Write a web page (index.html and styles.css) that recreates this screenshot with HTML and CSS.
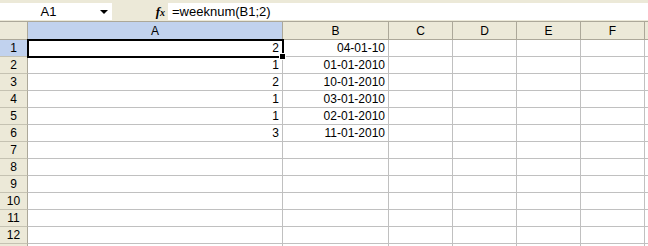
FILE: index.html
```html
<!DOCTYPE html>
<html lang="en">
<head>
    <meta charset="UTF-8">
    <title>Sheet1</title>
    <link rel="stylesheet" href="styles.css">
</head>
<body>
    <div class="formula-bar">
        <div class="name-box">
            <span class="name-text">A1</span>
            <span class="drop"></span>
        </div>
        <div class="fx"><i>f</i><b>x</b></div>
        <div class="formula">=weeknum(B1;2)</div>
    </div>
    <table class="sheet">
        <colgroup>
            <col class="corner">
            <col class="col-a">
            <col class="col-b">
            <col class="col-n"><col class="col-n"><col class="col-n"><col class="col-n"><col class="col-n">
        </colgroup>
        <thead>
            <tr>
                <th></th>
                <th class="active">A</th>
                <th>B</th>
                <th>C</th>
                <th>D</th>
                <th>E</th>
                <th>F</th>
                <th></th>
            </tr>
        </thead>
        <tbody>
            <tr>
                <th class="active">1</th>
                <td class="num selected">2<span class="sel"><span class="handle"></span></span></td>
                <td class="num">04-01-10</td>
                <td></td><td></td><td></td><td></td><td></td>
            </tr>
            <tr><th>2</th><td class="num">1</td><td class="num">01-01-2010</td><td></td><td></td><td></td><td></td><td></td></tr>
            <tr><th>3</th><td class="num">2</td><td class="num">10-01-2010</td><td></td><td></td><td></td><td></td><td></td></tr>
            <tr><th>4</th><td class="num">1</td><td class="num">03-01-2010</td><td></td><td></td><td></td><td></td><td></td></tr>
            <tr><th>5</th><td class="num">1</td><td class="num">02-01-2010</td><td></td><td></td><td></td><td></td><td></td></tr>
            <tr><th>6</th><td class="num">3</td><td class="num">11-01-2010</td><td></td><td></td><td></td><td></td><td></td></tr>
            <tr><th>7</th><td></td><td></td><td></td><td></td><td></td><td></td><td></td></tr>
            <tr><th>8</th><td></td><td></td><td></td><td></td><td></td><td></td><td></td></tr>
            <tr><th>9</th><td></td><td></td><td></td><td></td><td></td><td></td><td></td></tr>
            <tr><th>10</th><td></td><td></td><td></td><td></td><td></td><td></td><td></td></tr>
            <tr><th>11</th><td></td><td></td><td></td><td></td><td></td><td></td><td></td></tr>
            <tr><th>12</th><td></td><td></td><td></td><td></td><td></td><td></td><td></td></tr>
            <tr class="stub"><th></th><td></td><td></td><td></td><td></td><td></td><td></td><td></td></tr>
        </tbody>
    </table>
</body>
</html>
```

FILE: styles.css
```css
html, body {
    margin: 0;
    overflow: hidden;
    background-color: #fff;
    font-family: "Liberation Sans", Arial, sans-serif;
}

/* formula bar */
.formula-bar {
    display: flex;
    height: 21px;
    padding-top: 3px;
    box-sizing: border-box;
    background-color: #ece9d8;
}

.name-box {
    display: flex;
    align-items: center;
    width: 112px;
    height: 17px;
    background-color: #fff;
}

.name-text {
    width: 97px;
    text-align: center;
    font-size: 13px;
}

.drop {
    width: 0;
    height: 0;
    margin-left: 3px;
    border-left: 4px solid transparent;
    border-right: 4px solid transparent;
    border-top: 4px solid #000;
}

.fx {
    width: 56px;
    height: 17px;
    box-sizing: border-box;
    padding-right: 3px;
    text-align: right;
    font-family: "Liberation Serif", serif;
    font-size: 13px;
    line-height: 17px;
}

.fx i {
    font-weight: bold;
}

.fx b {
    font-size: 10px;
    font-style: italic;
}

.formula {
    flex: 1;
    height: 17px;
    padding-left: 4px;
    background-color: #fff;
    font-size: 13px;
    line-height: 17px;
}

/* grid */
.sheet {
    width: 709px;
    table-layout: fixed;
    border-collapse: separate;
    border-spacing: 0;
    font-size: 12px;
}

.corner { width: 28px; }
.col-a { width: 255px; }
.col-b { width: 106px; }
.col-n { width: 64px; }

.sheet th,
.sheet td {
    box-sizing: border-box;
    padding: 0 3px;
    height: 17px;
    white-space: nowrap;
    overflow: visible;
}

.sheet td {
    border-right: 1px solid #c0c0c0;
    border-bottom: 1px solid #c0c0c0;
}

.sheet th {
    font-weight: normal;
    background-color: #ece9d8;
    border-right: 1px solid #aca899;
    border-bottom: 1px solid #c5c2b2;
    text-align: center;
}

.sheet thead th {
    height: 19px;
    border-top: 1px solid #aca899;
    border-bottom: 1px solid #aca899;
}

.sheet th.active {
    background-color: #c1d2ee;
}

.num {
    text-align: right;
}

.selected {
    position: relative;
}

.sel {
    position: absolute;
    left: -1px;
    top: -1px;
    right: -2px;
    bottom: -2px;
    border: 2px solid #000;
}

.handle {
    position: absolute;
    right: -4px;
    bottom: -4px;
    width: 5px;
    height: 5px;
    background-color: #000;
    border: 1px solid #fff;
}
```
